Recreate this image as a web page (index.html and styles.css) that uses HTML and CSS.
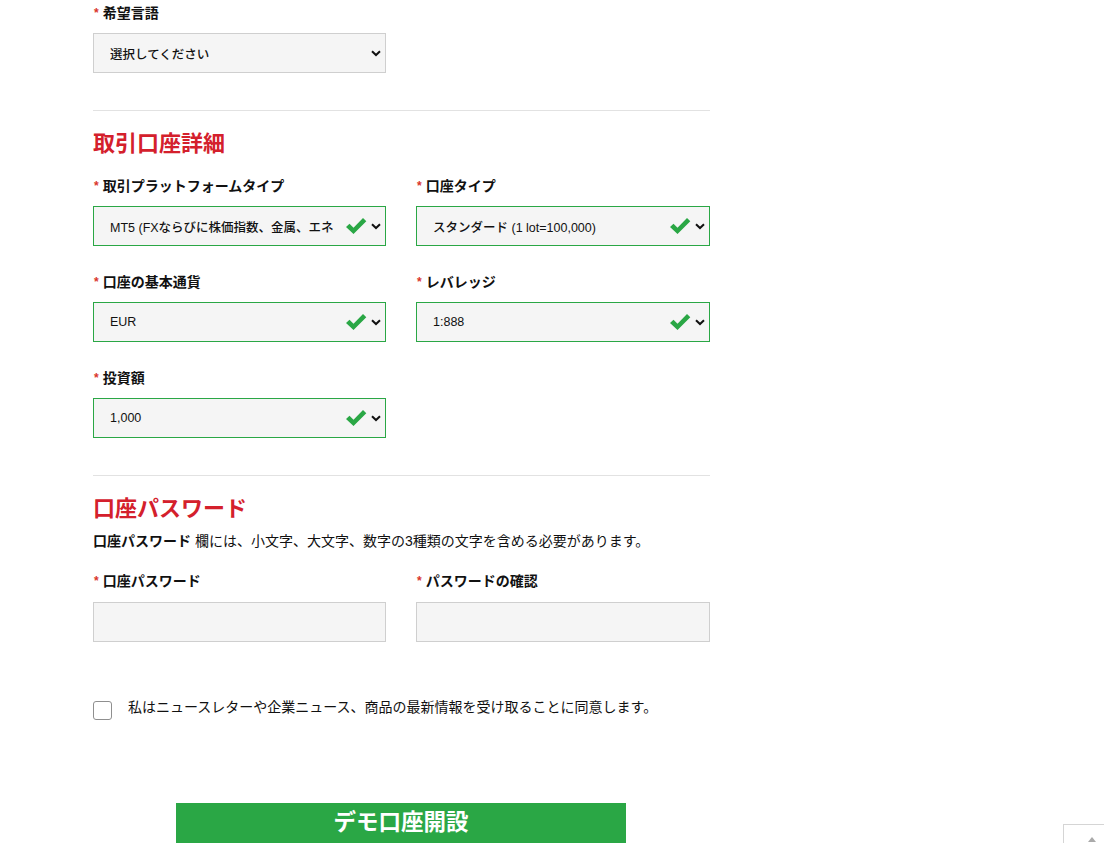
FILE: index.html
```html
<!DOCTYPE html>
<html lang="ja">
<head>
<meta charset="utf-8">
<title>デモ口座開設</title>
<link rel="stylesheet" href="styles.css">
</head>
<body>
<div class="page">
  <form class="form">
    <div class="row">
      <div class="field">
        <div class="label"><span class="req">*</span>希望言語</div>
        <div class="control select">
          <span class="value">選択してください</span>
          <svg class="chev" viewBox="0 0 10 7" width="10" height="7"><path d="M1 1.2 L5 5 L9 1.2" fill="none" stroke="#111" stroke-width="2"/></svg>
        </div>
      </div>
    </div>
    <hr class="divider first">
    <h2 class="heading">取引口座詳細</h2>
    <div class="row">
      <div class="field">
        <div class="label"><span class="req">*</span>取引プラットフォームタイプ</div>
        <div class="control select ok">
          <span class="value clip">MT5 (FXならびに株価指数、金属、エネルギー)</span>
          <svg class="check" viewBox="0 0 22 20" width="22" height="20"><path d="M1 11 L4.5 7.8 L8.5 11.8 L18 2 L21.3 5.3 L8.5 18 Z" fill="#2aa745"/></svg>
          <svg class="chev" viewBox="0 0 10 7" width="10" height="7"><path d="M1 1.2 L5 5 L9 1.2" fill="none" stroke="#111" stroke-width="2"/></svg>
        </div>
      </div>
      <div class="field">
        <div class="label"><span class="req">*</span>口座タイプ</div>
        <div class="control select ok">
          <span class="value">スタンダード (1 lot=100,000)</span>
          <svg class="check" viewBox="0 0 22 20" width="22" height="20"><path d="M1 11 L4.5 7.8 L8.5 11.8 L18 2 L21.3 5.3 L8.5 18 Z" fill="#2aa745"/></svg>
          <svg class="chev" viewBox="0 0 10 7" width="10" height="7"><path d="M1 1.2 L5 5 L9 1.2" fill="none" stroke="#111" stroke-width="2"/></svg>
        </div>
      </div>
    </div>
    <div class="row gap">
      <div class="field">
        <div class="label"><span class="req">*</span>口座の基本通貨</div>
        <div class="control select ok">
          <span class="value">EUR</span>
          <svg class="check" viewBox="0 0 22 20" width="22" height="20"><path d="M1 11 L4.5 7.8 L8.5 11.8 L18 2 L21.3 5.3 L8.5 18 Z" fill="#2aa745"/></svg>
          <svg class="chev" viewBox="0 0 10 7" width="10" height="7"><path d="M1 1.2 L5 5 L9 1.2" fill="none" stroke="#111" stroke-width="2"/></svg>
        </div>
      </div>
      <div class="field">
        <div class="label"><span class="req">*</span>レバレッジ</div>
        <div class="control select ok">
          <span class="value">1:888</span>
          <svg class="check" viewBox="0 0 22 20" width="22" height="20"><path d="M1 11 L4.5 7.8 L8.5 11.8 L18 2 L21.3 5.3 L8.5 18 Z" fill="#2aa745"/></svg>
          <svg class="chev" viewBox="0 0 10 7" width="10" height="7"><path d="M1 1.2 L5 5 L9 1.2" fill="none" stroke="#111" stroke-width="2"/></svg>
        </div>
      </div>
    </div>
    <div class="row gap">
      <div class="field">
        <div class="label"><span class="req">*</span>投資額</div>
        <div class="control select ok">
          <span class="value">1,000</span>
          <svg class="check" viewBox="0 0 22 20" width="22" height="20"><path d="M1 11 L4.5 7.8 L8.5 11.8 L18 2 L21.3 5.3 L8.5 18 Z" fill="#2aa745"/></svg>
          <svg class="chev" viewBox="0 0 10 7" width="10" height="7"><path d="M1 1.2 L5 5 L9 1.2" fill="none" stroke="#111" stroke-width="2"/></svg>
        </div>
      </div>
    </div>
    <hr class="divider">
    <h2 class="heading">口座パスワード</h2>
    <p class="note"><strong>口座パスワード</strong> 欄には、小文字、大文字、数字の3種類の文字を含める必要があります。</p>
    <div class="row pw">
      <div class="field">
        <div class="label"><span class="req">*</span>口座パスワード</div>
        <div class="control input"></div>
      </div>
      <div class="field">
        <div class="label"><span class="req">*</span>パスワードの確認</div>
        <div class="control input"></div>
      </div>
    </div>
    <label class="consent">
      <span class="box"></span>
      <span class="consent-text">私はニュースレターや企業ニュース、商品の最新情報を受け取ることに同意します。</span>
    </label>
    <div class="actions">
      <button type="button" class="submit">デモ口座開設</button>
    </div>
  </form>
</div>
<div class="totop"><span class="tri"></span></div>
</body>
</html>
```

FILE: styles.css
```css
* { box-sizing: border-box; }
html, body { margin: 0; padding: 0; background: #fff; }
body {
  font-family: "Liberation Sans", "Noto Sans CJK JP", sans-serif;
  color: #111;
  font-size: 14px;
  height: 843px;
  overflow: hidden;
}
.page { padding: 3px 0 0 93px; }
.form { width: 617px; }
.row { display: grid; grid-template-columns: 293px 294px; column-gap: 30px; }
.row.gap { margin-top: 26px; }
.field { display: flex; flex-direction: column; }
.label {
  font-weight: bold;
  font-size: 14px;
  line-height: 20px;
  height: 20px;
  margin-bottom: 10px;
}
.req { color: #d9342b; font-size: 12px; margin-right: 4px; margin-left: 1px; position: relative; top: -1px; }
.control {
  height: 40px;
  background: #f5f5f5;
  border: 1px solid #cfcfcf;
  display: flex;
  align-items: center;
  padding: 0 4px 0 16px;
}
.control.ok { border-color: #2aa745; }
.value { flex: 1; font-size: 12.5px; font-weight: 500; white-space: nowrap; overflow: hidden; }
.value.clip { text-overflow: clip; margin-right: 12px; }
.check { margin-right: 4px; flex: none; }
.chev { flex: none; }
.divider {
  border: 0;
  border-top: 1px solid #e2e2e2;
  margin: 37px 0 0;
  height: 0;
}
.heading {
  color: #d4202c;
  font-size: 22px;
  font-weight: bold;
  line-height: 28px;
  margin: 19px 0 18px;
}
.heading + .note { margin-top: -10px; }
.note { margin: 0 0 20px; font-size: 14px; line-height: 20px; }
.note strong { font-weight: bold; }
.row.pw .label { margin-bottom: 11px; }
.consent {
  display: flex;
  align-items: center;
  margin-top: 58px;
  height: 20px;
}
.box {
  width: 19px;
  height: 19px;
  border: 1px solid #8f8f8f;
  border-radius: 3px;
  background: #fff;
  flex: none;
}
.consent-text { margin-left: 16px; font-size: 14px; line-height: 20px; position: relative; top: -3px; }
.actions { display: flex; justify-content: center; margin-top: 83px; }
.submit {
  width: 450px;
  height: 42px;
  background: #2aa745;
  border: 0;
  color: #fff;
  font-family: "Liberation Sans", "Noto Sans CJK JP", sans-serif;
  font-size: 22.5px;
  font-weight: bold;
  line-height: 40px;
  padding: 0 0 2px;
  margin-left: -1px;
}
.totop {
  position: fixed;
  left: 1063px;
  top: 824px;
  width: 50px;
  height: 40px;
  border: 1px solid #d5d5d5;
  background: #fff;
}
.tri {
  position: absolute;
  left: 24px;
  top: 12px;
  width: 0; height: 0;
  border-left: 4px solid transparent;
  border-right: 4px solid transparent;
  border-bottom: 5px solid #aaa;
}
```
